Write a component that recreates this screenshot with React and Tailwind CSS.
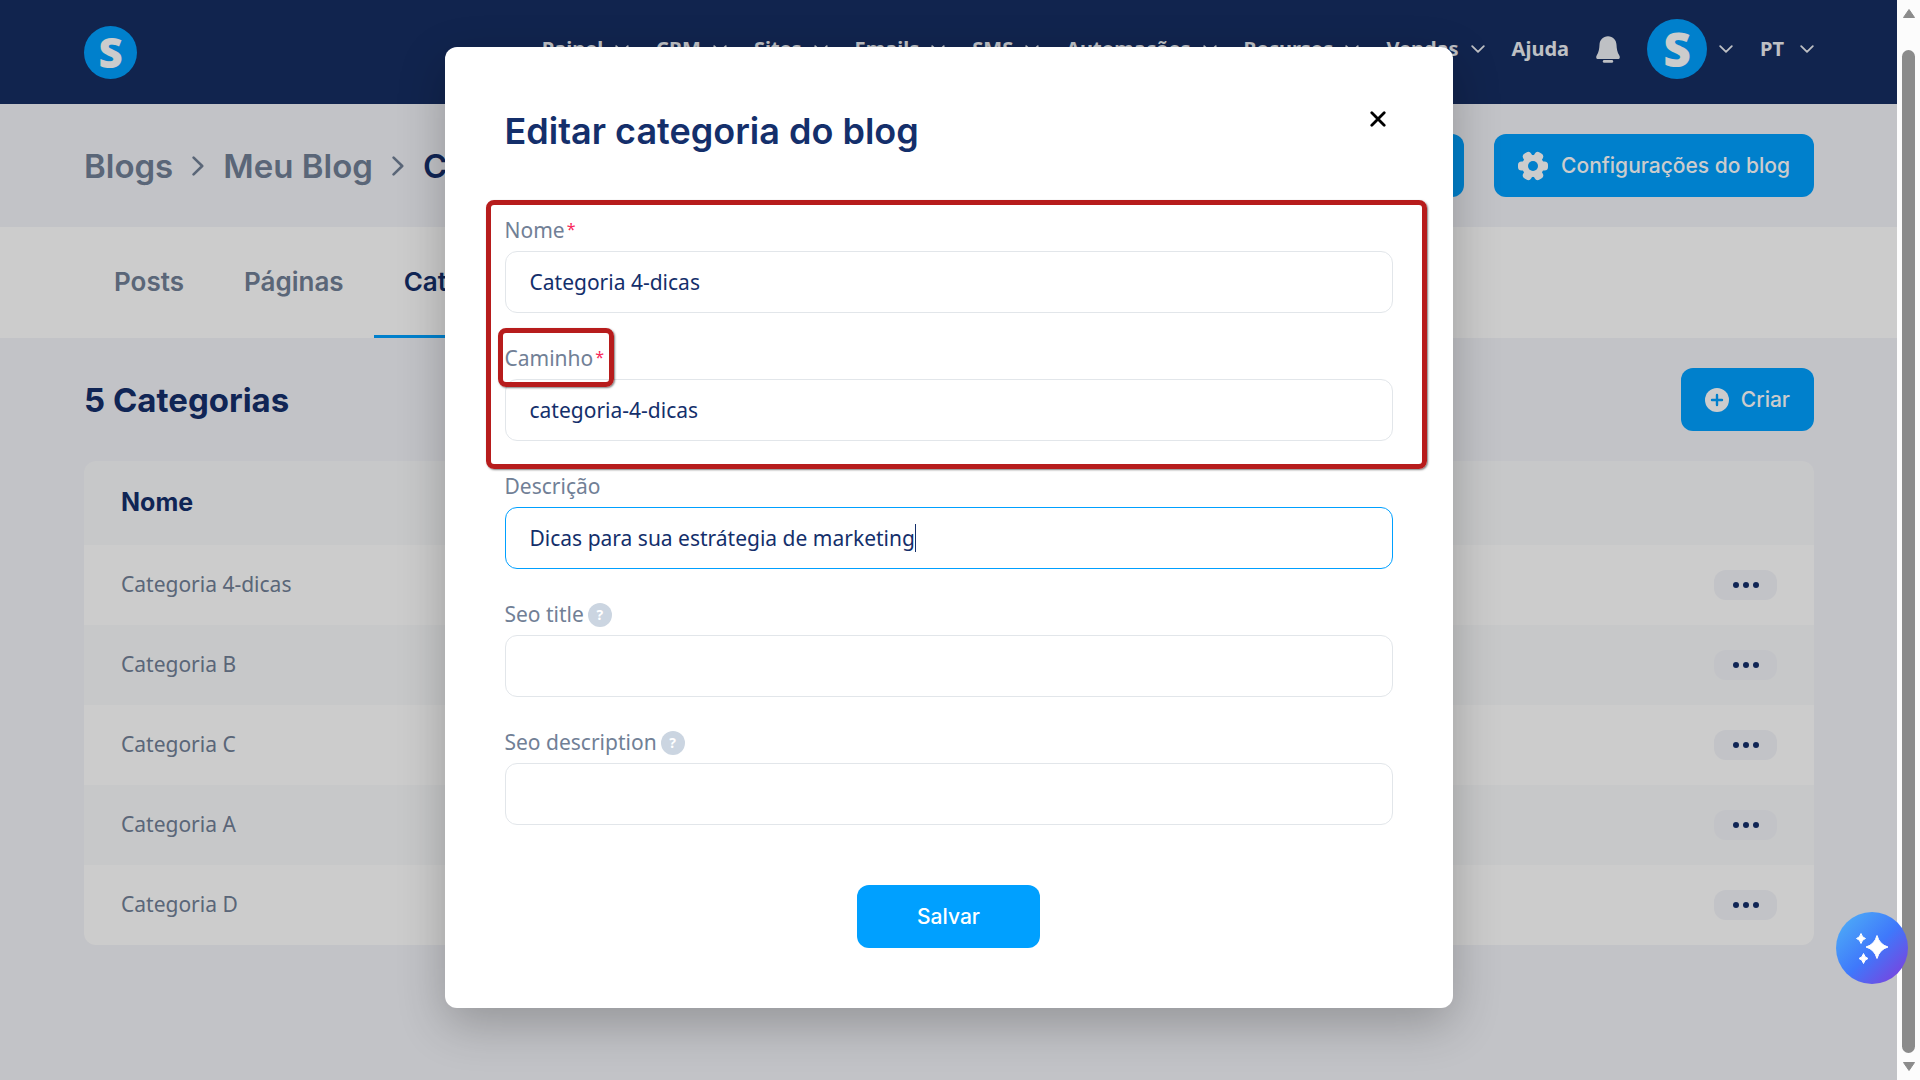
import { useState } from "react";

const NAV_ITEMS = ["Painel", "CRM", "Sites", "Emails", "SMS", "Automações", "Recursos", "Vendas"];
const TABS = ["Posts", "Páginas", "Categorias"];
const CATEGORIES = ["Categoria 4-dicas", "Categoria B", "Categoria C", "Categoria A", "Categoria D"];

function ChevronDown() {
  return (
    <svg viewBox="0 0 14 8" className="w-[14px] h-2 shrink-0" fill="none" stroke="currentColor" strokeWidth="1.8" strokeLinecap="round" strokeLinejoin="round">
      <path d="M1.2 1.2 7 6.8l5.8-5.6" />
    </svg>
  );
}

function ChevronRight() {
  return (
    <svg viewBox="0 0 12 20" className="w-3 h-5 shrink-0 text-[#718096]" fill="none" stroke="currentColor" strokeWidth="2.6" strokeLinecap="round" strokeLinejoin="round">
      <path d="M1.6 1.6 10.2 10l-8.6 8.4" />
    </svg>
  );
}

function BellIcon() {
  return (
    <svg viewBox="0 0 24 27" className="w-6 h-[27px]" fill="currentColor">
      <path d="M12 0.3c-5 0-8.2 3.6-8.5 8.4-.2 4.2-.8 7.5-2.7 10.5-1.2 2-.6 3.900 1.600 3.900h19.200c2.200 0 2.800-1.900 1.600-3.900-1.900-3-2.500-6.300-2.700-10.500C20.200 3.900 17 .3 12 .3z" />
      <rect x="6.8" y="24" width="10.4" height="2.8" rx="1.4" />
    </svg>
  );
}

function GearIcon() {
  const teeth = [0, 60, 120];
  return (
    <svg viewBox="0 0 30 30" className="w-[30px] h-[30px]">
      <g fill="currentColor">
        <circle cx="15" cy="15" r="11" />
        {teeth.map((a) => (
          <rect key={a} x="0" y="10.4" width="30" height="9.2" rx="3.6" transform={`rotate(${a} 15 15)`} />
        ))}
      </g>
      <circle cx="15" cy="15" r="5" fill="#00a0ff" />
    </svg>
  );
}

function PlusIcon() {
  return (
    <svg viewBox="0 0 24 24" className="w-6 h-6">
      <circle cx="12" cy="12" r="12" fill="currentColor" />
      <path d="M12 7v10M7 12h10" stroke="#00a0ff" strokeWidth="2.4" strokeLinecap="round" />
    </svg>
  );
}

function DotsIcon() {
  return (
    <svg viewBox="0 0 26 6" className="w-[26px] h-[6px]" fill="currentColor">
      <circle cx="3" cy="3" r="3" />
      <circle cx="13" cy="3" r="3" />
      <circle cx="23" cy="3" r="3" />
    </svg>
  );
}

function SparkleIcon() {
  return (
    <svg viewBox="0 0 72 72" className="w-full h-full" fill="#fff">
      <path d="M41 23.5Q43.5 32.5 52 35Q43.5 37.5 41 46.5Q38.5 37.5 30 35Q38.5 32.5 41 23.5Z" stroke="#fff" strokeLinejoin="round" />
      <path d="M25 21.5Q26 25.5 29.5 26.5Q26 27.5 25 31.5Q24 27.5 20.5 26.5Q24 25.5 25 21.5Z" stroke="#fff" strokeLinejoin="round" />
      <path d="M27.5 41.5Q28.5 45.5 32 46.5Q28.5 47.5 27.5 51.5Q26.5 47.5 23 46.5Q26.5 45.5 27.5 41.5Z" stroke="#fff" strokeLinejoin="round" />
    </svg>
  );
}

function Header() {
  return (
    <header className="bg-[#162d62] h-[104px] pl-[84px] pr-[83px] flex items-center justify-between">
      <a href="#" className="w-[53px] h-[53px] rounded-full bg-[#00a0ff] text-white text-[42px] leading-none font-black flex items-center justify-center">
        S
      </a>
      <nav className="flex items-center gap-[27px] pb-[6px] text-xl font-bold text-[#eef1f5]">
        {NAV_ITEMS.map((item) => (
          <button key={item} className="flex items-center gap-3">
            {item}
            <ChevronDown />
          </button>
        ))}
        <a href="#">Ajuda</a>
        <button aria-label="Notificações">
          <BellIcon />
        </button>
        <button className="flex items-center gap-3">
          <span className="w-[60px] h-[60px] rounded-full bg-[#00a0ff] text-white text-5xl leading-none font-black flex items-center justify-center">
            S
          </span>
          <ChevronDown />
        </button>
        <button className="flex items-center gap-4">
          PT
          <ChevronDown />
        </button>
      </nav>
    </header>
  );
}

function Field({ id, label, value, required, help, active, marked }) {
  return (
    <div>
      <label htmlFor={id} className="relative z-10 inline-flex items-center h-8 mb-1 align-top text-[21px] text-[#718096]">
        {label}
        {required && <span className="ml-[2px] mb-1 text-base text-[#f8285a]">*</span>}
        {help && (
          <span className="ml-1 w-6 h-6 rounded-full bg-[#cbd5e1] text-white text-sm font-bold flex items-center justify-center">
            ?
          </span>
        )}
        {marked && (
          <span className="absolute -top-[15px] -bottom-3 -left-[7px] -right-[10px] rounded-lg border-5 border-[#b71c1c] shadow-[1px_1px_2px_rgba(0,0,0,0.5)]" />
        )}
      </label>
      <div className="relative">
        <input
          id={id}
          type="text"
          defaultValue={value}
          className={`block w-full h-[62px] px-6 rounded-xl border bg-white text-[21px] text-[#142f6b] outline-none ${
            active ? "border-[#00a0ff]" : "border-[#e2e6ea]"
          }`}
        />
        {active && <span className="absolute top-[17px] left-[410px] w-px h-7 bg-[#142f6b]" />}
      </div>
    </div>
  );
}

function EditModal({ onClose }) {
  return (
    <div className="absolute inset-0 bg-black/20 flex items-start justify-center pt-[47px]">
      <div role="dialog" aria-label="Editar categoria do blog" className="w-full max-w-[1008px] bg-white rounded-xl p-[60px] shadow-[0_16px_48px_rgba(0,0,0,0.24)]">
        <div className="flex items-start justify-between">
          <h2 className="font-['Inter',sans-serif] text-4xl leading-[48px] font-semibold text-[#142f6b]">
            Editar categoria do blog
          </h2>
          <button onClick={onClose} aria-label="Fechar" className="w-[30px] h-6 flex items-center justify-center">
            <svg viewBox="0 0 16 16" className="w-4 h-4" stroke="#000" strokeWidth="2.8" strokeLinecap="round">
              <path d="M1.8 1.8l12.4 12.4M14.2 1.8 1.8 14.2" />
            </svg>
          </button>
        </div>

        <form className="mt-[60px] flex flex-col gap-[30px]" onSubmit={(e) => e.preventDefault()}>
          <div className="relative flex flex-col gap-[30px]">
            <Field id="nome" label="Nome" value="Categoria 4-dicas" required />
            <Field id="caminho" label="Caminho" value="categoria-4-dicas" required marked />
            <span className="absolute -top-[15px] -bottom-7 -left-[19px] -right-[34px] rounded-lg border-5 border-[#b71c1c] shadow-[1px_1px_2px_rgba(0,0,0,0.5)] pointer-events-none" />
          </div>
          <Field id="descricao" label="Descrição" value="Dicas para sua estrátegia de marketing" active />
          <Field id="seo-title" label="Seo title" help />
          <Field id="seo-description" label="Seo description" help />
          <button className="mt-[30px] self-center h-[63px] px-[60px] rounded-xl bg-[#00a0ff] text-white font-['Inter',sans-serif] text-[21px] font-medium">
            Salvar
          </button>
        </form>
      </div>
    </div>
  );
}

function Scrollbar() {
  return (
    <div className="w-[23px] shrink-0 bg-[#fcfcfc] flex flex-col items-center py-[9px] text-[#8b8b8b]">
      <svg viewBox="0 0 12 9" className="w-3 h-[9px]" fill="currentColor">
        <path d="M6 0.5 11.5 8.5H.5z" stroke="currentColor" strokeLinejoin="round" />
      </svg>
      <div className="w-[13px] flex-1 mt-8 mb-[9px] rounded-full bg-[#8b8b8b]" />
      <svg viewBox="0 0 12 9" className="w-3 h-[9px]" fill="currentColor">
        <path d="M6 8.5 11.5.5H.5z" stroke="currentColor" strokeLinejoin="round" />
      </svg>
    </div>
  );
}

export default function App() {
  const [editing, setEditing] = useState(true);

  return (
    <div className="min-h-screen flex font-['Noto_Sans',sans-serif]">
      <div className="relative flex-1 min-w-0 bg-[#f3f4f9]">
        <Header />

        {/* Breadcrumb */}
        <div className="pl-[84px] pr-[83px] py-[30px] flex items-center justify-between font-['Inter',sans-serif]">
          <div className="flex items-center gap-[19px] text-[33px] leading-10 font-semibold text-[#718096]">
            <a href="#">Blogs</a>
            <ChevronRight />
            <a href="#">Meu Blog</a>
            <ChevronRight />
            <span className="text-[#142f6b]">Categorias</span>
          </div>
          <div className="flex gap-[30px] text-[21px] font-medium text-white">
            <button className="h-[63px] px-6 rounded-xl bg-[#00a0ff]">Ver blog</button>
            <button className="h-[63px] px-6 rounded-xl bg-[#00a0ff] flex items-center gap-[13px]">
              <GearIcon />
              Configurações do blog
            </button>
          </div>
        </div>

        {/* Tabs */}
        <div className="bg-white pl-[84px] pr-[83px] flex font-['Inter',sans-serif] text-[26px] font-semibold">
          {TABS.map((tab) => (
            <button
              key={tab}
              className={`h-[111px] px-[30px] border-b-3 ${
                tab === "Categorias" ? "border-[#00a0ff] text-[#142f6b]" : "border-transparent text-[#718096]"
              }`}
            >
              {tab}
            </button>
          ))}
        </div>

        <main className="pl-[84px] pr-[83px] py-[30px]">
          <div className="flex items-center justify-between mb-[30px] font-['Inter',sans-serif]">
            <h1 className="text-[33px] leading-10 font-bold text-[#142f6b]">5 Categorias</h1>
            <button className="h-[63px] px-6 rounded-xl bg-[#00a0ff] text-white text-[21px] font-medium flex items-center gap-3">
              <PlusIcon />
              Criar
            </button>
          </div>

          <div className="rounded-xl overflow-hidden">
            <table className="w-full text-left">
              <thead>
                <tr className="h-[84px] bg-[#f9fafc]">
                  <th className="px-[37px] font-['Inter',sans-serif] text-[25px] font-bold text-[#142f6b]">Nome</th>
                  <th />
                </tr>
              </thead>
              <tbody>
                {CATEGORIES.map((name) => (
                  <tr key={name} className="h-20 bg-white even:bg-[#f9fafc] text-[21px] text-[#718096]">
                    <td className="px-[37px]">{name}</td>
                    <td className="px-[37px]">
                      <button aria-label="Ações" className="ml-auto w-[63px] h-[30px] rounded-xl bg-[#f3f4f9] text-[#142f6b] flex items-center justify-center">
                        <DotsIcon />
                      </button>
                    </td>
                  </tr>
                ))}
              </tbody>
            </table>
          </div>
        </main>

        {editing && <EditModal onClose={() => setEditing(false)} />}
      </div>

      <Scrollbar />

      <button
        aria-label="Assistente"
        className="fixed right-3 bottom-24 w-[72px] h-[72px] rounded-full bg-[linear-gradient(135deg,#4dabf7_8%,#3f78fb_52%,#7b42dd_92%)]"
      >
        <SparkleIcon />
      </button>
    </div>
  );
}
